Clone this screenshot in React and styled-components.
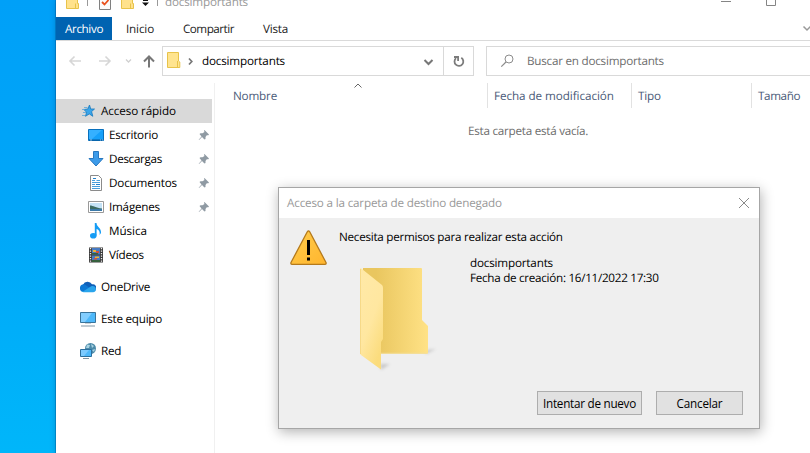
import React from "react";
import styled, { createGlobalStyle } from "styled-components";

const GlobalStyle = createGlobalStyle`
  * { box-sizing: border-box; }
  body { margin: 0; overflow: hidden; }
  svg { display: block; flex: none; }
`;

const Desktop = styled.div`
  position: relative;
  display: flex;
  width: 810px;
  height: 453px;
  padding-left: 56px;
  overflow: hidden;
  background: linear-gradient(180deg, #00a0f8 0%, #00a6f8 45%, #00b6fa 100%);
  font-family: "Open Sans", "Noto Sans", sans-serif;
  font-size: 11.7px;
  line-height: 16px;
  color: #000;
  text-rendering: geometricPrecision;
`;

const Window = styled.main`
  display: flex;
  flex-direction: column;
  flex: 1;
  min-width: 0;
  background: #fff;
  box-shadow: 0 0 6px rgba(0, 40, 90, 0.3), -1px 0 0 rgba(0, 70, 130, 0.3);
`;

const Text = styled.span`
  white-space: nowrap;
  letter-spacing: ${(p) => p.$track || 0}px;
`;

const TitleBar = styled.header`
  display: flex;
  height: 17px;
  color: #999;
`;

const QuickAccess = styled.div`
  width: 109px;
`;

const WindowTitle = styled.div`
  flex: 1;
  margin-top: -6px;
`;

const WindowControls = styled.div`
  width: 100px;
`;

const Tabs = styled.nav`
  display: flex;
  height: 24px;
  border-bottom: 1px solid #dadada;
`;

const Tab = styled.div`
  width: ${(p) => p.$width}px;
  padding: 4px 0 0 ${(p) => p.$pad}px;
  background: ${(p) => (p.$active ? "#0063b1" : "transparent")};
  color: ${(p) => (p.$active ? "#fff" : "#222")};
`;

const RibbonToggle = styled.div`
  margin-left: auto;
`;

const AddressRow = styled.div`
  display: flex;
  height: 42px;
  padding-top: 5px;
`;

const NavArrows = styled.div`
  width: 106px;
`;

const AddressBox = styled.div`
  display: flex;
  width: 312px;
  height: 30px;
  border: 1px solid #d9d9d9;
`;

const Crumbs = styled.div`
  display: flex;
  align-items: center;
  width: 281px;
  padding-left: 4px;
  border-right: 1px solid #d9d9d9;
`;

const CrumbName = styled.div`
  flex: 1;
`;

const Refresh = styled.div`
  width: 29px;
`;

const SearchBox = styled.div`
  display: flex;
  align-items: center;
  flex: 1;
  height: 30px;
  margin-left: 12px;
  border: 1px solid #d9d9d9;
  border-right: 0;
  color: #6d6d6d;
`;

const Body = styled.div`
  display: flex;
  flex: 1;
`;

const Sidebar = styled.aside`
  width: 159px;
  padding-top: 16px;
  border-right: 1px solid #f0f0f0;
`;

const Entry = styled.div`
  display: flex;
  align-items: center;
  width: 156px;
  height: 24px;
  margin-top: ${(p) => (p.$gap ? 8 : 0)}px;
  padding: 0 2px 0 ${(p) => (p.$nested ? 32 : 24)}px;
  gap: 5px;
  background: ${(p) => (p.$selected ? "#d9d9d9" : "transparent")};
`;

const EntryName = styled.div`
  flex: 1;
`;

const Content = styled.section`
  flex: 1;
  min-width: 0;
`;

const Columns = styled.div`
  display: flex;
  height: 25px;
  color: #4a5a78;
`;

const Column = styled.div`
  position: relative;
  width: ${(p) => p.$width}px;
  flex: none;
  padding: 5px 0 0 ${(p) => p.$pad}px;
  border-right: 1px solid #e2e2e2;
`;

const SortMark = styled.div`
  position: absolute;
  left: 138px;
  top: 0;
`;

const EmptyNote = styled.div`
  margin: 15px 0 0 253px;
  color: #6d6d6d;
`;

const Dialog = styled.div`
  position: absolute;
  left: 278px;
  top: 187px;
  width: 482px;
  height: 242px;
  display: flex;
  flex-direction: column;
  border: 1px solid #a6a6a6;
  background: #efefef;
  box-shadow: 1px 3px 12px rgba(0, 0, 0, 0.3);
`;

const DialogTitle = styled.div`
  display: flex;
  align-items: center;
  justify-content: space-between;
  height: 30px;
  padding: 0 9px 0 8px;
  background: #fff;
  color: #999;
`;

const DialogMain = styled.div`
  display: flex;
  flex: 1;
  padding: 11px 0 0 11px;
`;

const Message = styled.div`
  margin-left: 11px;
`;

const Detail = styled.div`
  display: flex;
  margin: 11px 0 0 21px;
`;

const FolderPreview = styled.div`
  height: 118px;
  padding-top: 12px;
`;

const Info = styled.div`
  display: flex;
  flex-direction: column;
  margin-left: 30px;
  line-height: 15px;
`;

const Actions = styled.div`
  display: flex;
  justify-content: flex-end;
  gap: 14px;
  padding: 0 16px 13px 0;
`;

const Button = styled.button`
  width: ${(p) => p.$width}px;
  height: 24px;
  padding: 0 0 1px;
  border: 1px solid #adadad;
  background: #e1e1e1;
  font: inherit;
  color: #000;
`;

const MiniFolder = () => (
  <svg width="14" height="20" viewBox="0 0 14 20">
    <path d="M.5 1.500H11.500V10L12.800 11V16.500H.5Z" fill="#ffe48f" stroke="#e8c34a" />
    <path d="M10.500 10V16.500" stroke="#e8c34a" />
  </svg>
);

const QuickAccessIcons = () => (
  <svg width="109" height="17" viewBox="0 0 109 17">
    <g fill="#ffe28c" stroke="#e8c34a">
      <path d="M10.500-6V8.500H22.500V3.500H21.500V-6ZM19.500 3.500V8" />
      <path d="M65.500-6V8.500H77.500V3.500H76.500V-6ZM74.500 3.500V8" />
    </g>
    <path d="M31.500 0V6M101.500 0V6" stroke="#999" />
    <path d="M43.500-2V9.500H54.500V-2" fill="#fafafa" stroke="#808080" />
    <path d="M46 2L48.500 4.500L52.500 0" fill="none" stroke="#e8501c" strokeWidth="1.800" />
    <path d="M87 0H92V1H87ZM86 2.500H93L89.500 6Z" fill="#111" />
  </svg>
);

const ControlIcons = () => (
  <svg width="100" height="17" viewBox="0 0 100 17" fill="none" stroke="#858585">
    <path d="M11 1.500H21M56.500 0V5.500H65.500V0" />
  </svg>
);

const ArrowIcons = () => (
  <svg width="106" height="30" viewBox="0 0 106 30" fill="none" strokeWidth="1.600">
    <path d="M25 15H14M18.500 10.500L14 15L18.500 19.500M43 15H54M49.500 10.500L54 15L49.500 19.500" stroke="#d6d6d6" />
    <path d="M70 13.500L72.500 16L75 13.500" stroke="#d0d0d0" strokeWidth="1.300" />
    <path d="M93 21.500V11M88 15.500L93 10.500L98 15.500" stroke="#777" strokeWidth="2" />
  </svg>
);

const Chevron = ({ width, height, d, color = "#777", stroke = 2 }) => (
  <svg width={width} height={height} viewBox={`0 0 ${width} ${height}`} fill="none" stroke={color} strokeWidth={stroke}>
    <path d={d} />
  </svg>
);

const RefreshIcon = () => (
  <svg width="29" height="28" viewBox="0 0 29 28" fill="none" stroke="#7c7c7c" strokeWidth="1.800">
    <path d="M17.300 10.800A4.400 4.400 0 1 1 12 11.200" />
    <path d="M10 10H14.100V14" />
  </svg>
);

const SearchIcon = () => (
  <svg width="40" height="28" viewBox="0 0 40 28" fill="none" stroke="#8c8c8c">
    <circle cx="22" cy="12" r="4" />
    <path d="M19 15L14.300 19.700" strokeWidth="1.200" />
  </svg>
);

const Pin = () => (
  <svg width="12" height="12" viewBox="0 0 12 12" fill="#8f9aa3">
    <path d="M6.500 1L11 5.500L10 6.500L9 6L7.500 8V10L6.500 10.500L4 8L1 11L.7 10.700L3.500 7.500L1.500 5L2.500 4.200H4.500L6.500 3L6 1.700Z" />
  </svg>
);

const icons = {
  star: (
    <>
      <path d="M9.500 2L10.700 6H14.500L11.600 8.600L12.800 13.300L9.300 10.900L5.500 13.300L6.600 9.200L3.800 6.500L7.800 6Z" fill="#39a5ea" stroke="#1679be" strokeWidth=".8" />
      <path d="M4 4.500H7.500M2 6.500H5M3 9.500H6M2 12.500H5" stroke="#58a7d9" strokeWidth=".8" />
    </>
  ),
  desktop: (
    <>
      <path d="M.5 2.500H15.500V13.500H.5Z" fill="#16a0fa" stroke="#0870bd" />
      <path d="M1 3H14L4 12H1Z" fill="#35b0ff" />
      <path d="M1 13H15" stroke="#075b9c" />
      <path d="M2 13H4M12 13H13M14 13H15" stroke="#cfe8fa" strokeWidth=".7" />
    </>
  ),
  download: <path d="M5.500.5H10.500V7.500H15L8 15L1 7.500H5.500Z" fill="#3d9be9" stroke="#2878c0" />,
  document: (
    <>
      <path d="M2.500.5H10.500L13.500 3.500V15.500H2.500Z" fill="#fff" stroke="#8b8b8b" />
      <path d="M4 5.500H7M4 7.500H12M4 9.500H7M4 11.500H12M4 13.500H12M8.500 5.500H12" stroke="#4a9fdc" />
      <path d="M5 3.500H8M8 9.500H12" stroke="#2382cc" />
    </>
  ),
  picture: (
    <>
      <path d="M.5 2.500H15.500V13.500H.5Z" fill="#fff" stroke="#999" />
      <path d="M2 4H14V12H2Z" fill="#c4e2f6" />
      <path d="M2 6.500C5 6.500 8 9 14 9.500V10H2Z" fill="#3c6b62" />
      <path d="M2 10H14V12H2Z" fill="#3b79a8" />
    </>
  ),
  music: (
    <>
      <ellipse cx="5.300" cy="12.700" rx="3.300" ry="2.800" fill="#149cf5" />
      <path d="M6.800 0H8.500C8.500 4 13.500 4.500 13 10L11.500 12C12.500 8 10 6.500 8.600 6V12.500H6.800Z" fill="#149cf5" />
    </>
  ),
  video: (
    <>
      <path d="M1 .5H15V15.500H1Z" fill="#3a3a3a" />
      <path d="M2.500 1V15M13.500 1V15" stroke="#eee" strokeWidth="1.300" strokeDasharray="1.300 1.200" />
      <path d="M4 1H12V7.500H4ZM4 8.500H12V15H4Z" fill="#477bc4" />
      <path d="M5 3H8V5H5ZM7 9.500H11V11H7Z" fill="#e7b43a" />
      <path d="M8 4H11V6H8ZM6 11H9V12.500H6Z" fill="#d4513f" />
      <path d="M4 6H10V7.500H4ZM4 13H12V15H4Z" fill="#35613e" />
    </>
  ),
  cloud: (
    <>
      <path d="M3 12A3.300 3.300 0 0 1 3 5.700A5 5 0 0 1 12 5.300A3.500 3.500 0 0 1 14 12Z" fill="#0f5fb8" />
      <path d="M0 9.200A3.500 3.500 0 0 1 5.500 6L10 9L4 13A3.500 3.500 0 0 1 0 9.200Z" fill="#0c78d4" />
      <path d="M3 12.500L10 8C12 6 16 7 16 10.300C16 12 15 13.200 13 13.200H3.500C2.500 13.200 1.800 12.700 1.300 12Z" fill="#2aa5ec" />
    </>
  ),
  computer: (
    <>
      <path d="M.5 1.500H15.500V11.500H.5Z" fill="#4db8fa" stroke="#39749b" />
      <path d="M1 2H12L5 11H1Z" fill="#82ceff" />
      <path d="M5 12.500H11" stroke="#c9d2d8" />
      <path d="M1 15H15" stroke="#8096a5" />
    </>
  ),
  network: (
    <>
      <circle cx="10.500" cy="5.500" r="5.500" fill="#4d8ba9" />
      <path d="M7 1.500L10 2L9 5L6 5ZM11 1L14 3L12 5ZM12 7L15 6L14 9Z" fill="#a9d3e3" />
      <path d="M.5 6.500H11.500V13.500H.5Z" fill="#4db8fa" stroke="#2c6f9d" />
      <path d="M1 7H9L4 13H1Z" fill="#7bcaff" />
      <path d="M3 15.500H9" stroke="#8096a5" />
    </>
  ),
};

const EntryIcon = ({ name }) => (
  <svg width="16" height="16" viewBox="0 0 16 16" fill="none">
    {icons[name]}
  </svg>
);

const entries = [
  { name: "Acceso rápido", icon: "star", track: -0.11, selected: true },
  { name: "Escritorio", icon: "desktop", track: -0.24, nested: true, pinned: true },
  { name: "Descargas", icon: "download", track: -0.33, nested: true, pinned: true },
  { name: "Documentos", icon: "document", track: -0.17, nested: true, pinned: true },
  { name: "Imágenes", icon: "picture", track: -0.23, nested: true, pinned: true },
  { name: "Música", icon: "music", track: -0.05, nested: true },
  { name: "Vídeos", icon: "video", track: -0.21, nested: true },
  { name: "OneDrive", icon: "cloud", track: -0.31, gap: true },
  { name: "Este equipo", icon: "computer", track: -0.26, gap: true },
  { name: "Red", icon: "network", track: -0.3, gap: true },
];

const WarningIcon = () => (
  <svg width="38" height="37" viewBox="0 0 38 37">
    <defs>
      <linearGradient id="amber" x1="0" y1="0" x2="1" y2="1">
        <stop offset="0" stopColor="#ffcd4c" />
        <stop offset="1" stopColor="#ffb52e" />
      </linearGradient>
    </defs>
    <path d="M17.300 2.800Q18.500.8 19.700 2.800L36 33.500Q36.500 35.300 35 35.300H2Q.5 35.300 1 33.500Z" fill="url(#amber)" stroke="#b57a1c" strokeWidth="1.300" strokeLinejoin="round" />
    <path d="M17 11H20V26H17ZM17 28.500H20V31.500H17Z" fill="#000" />
  </svg>
);

const FolderIcon = () => (
  <svg width="80" height="106" viewBox="0 0 80 106">
    <defs>
      <linearGradient id="back">
        <stop offset=".2" stopColor="#e9c65f" />
        <stop offset="1" stopColor="#ffe286" />
      </linearGradient>
      <linearGradient id="front" x1="0" y1="0" x2=".6" y2="1">
        <stop offset="0" stopColor="#ffe9a8" />
        <stop offset=".6" stopColor="#ffe7a0" />
        <stop offset="1" stopColor="#fbdc7d" />
      </linearGradient>
      <filter id="soft" x="-50%" y="-50%" width="200%" height="200%">
        <feGaussianBlur stdDeviation="1.500" />
      </filter>
    </defs>
    <path d="M66 82L76 81L66 86ZM20 96L30 96L21 102Z" fill="#999" opacity=".45" filter="url(#soft)" />
    <path d="M3 0H61Q62 0 62 1V52L68 58V84.500Q68 86 66.500 86H3Z" fill="url(#back)" />
    <path d="M21 85.300H67" stroke="#f3df9f" />
    <path d="M0 1Q0 0 1 .3L22 17Q23 18 23 20V71L21 74V101.500L1 87Q0 86 0 85Z" fill="url(#front)" />
    <path d="M.5 1V86" stroke="#f6d988" />
  </svg>
);

export default function App() {
  return (
    <Desktop>
      <GlobalStyle />
      <Window>
        <TitleBar>
          <QuickAccess><QuickAccessIcons /></QuickAccess>
          <WindowTitle><Text $track={-0.19}>docsimportants</Text></WindowTitle>
          <WindowControls><ControlIcons /></WindowControls>
        </TitleBar>
        <Tabs>
          <Tab $active $width={56} $pad={9}><Text $track={-0.39}>Archivo</Text></Tab>
          <Tab $width={57} $pad={14}><Text $track={-0.16}>Inicio</Text></Tab>
          <Tab $width={80} $pad={14}><Text $track={-0.51}>Compartir</Text></Tab>
          <Tab $width={60} $pad={14}><Text $track={-0.23}>Vista</Text></Tab>
          <RibbonToggle>
            <Chevron width={8} height={23} d="M1.500 9.500L5 13L8.500 9.500" color="#999" stroke={1.5} />
          </RibbonToggle>
        </Tabs>
        <AddressRow>
          <NavArrows><ArrowIcons /></NavArrows>
          <AddressBox>
            <Crumbs>
              <MiniFolder />
              <Chevron width={21} height={28} d="M8 11.500L10.800 14.500L8 17.500" stroke={1.7} />
              <CrumbName><Text $track={-0.19}>docsimportants</Text></CrumbName>
              <Chevron width={21} height={28} d="M2.500 13L6.500 17L10.500 13" />
            </Crumbs>
            <Refresh><RefreshIcon /></Refresh>
          </AddressBox>
          <SearchBox>
            <SearchIcon />
            <Text $track={-0.24}>Buscar en docsimportants</Text>
          </SearchBox>
        </AddressRow>
        <Body>
          <Sidebar>
            {entries.map((e) => (
              <Entry key={e.name} $selected={e.selected} $nested={e.nested} $gap={e.gap}>
                <EntryIcon name={e.icon} />
                <EntryName><Text $track={e.track}>{e.name}</Text></EntryName>
                {e.pinned && <Pin />}
              </Entry>
            ))}
          </Sidebar>
          <Content>
            <Columns>
              <Column $width={273} $pad={18}>
                <Text $track={-0.19}>Nombre</Text>
                <SortMark><Chevron width={10} height={6} d="M1.500 4.500L5 1L8.500 4.500" stroke={1} color="#666" /></SortMark>
              </Column>
              <Column $width={144} $pad={6}><Text $track={-0.07}>Fecha de modificación</Text></Column>
              <Column $width={120} $pad={6}><Text $track={-0.15}>Tipo</Text></Column>
              <Column $width={80} $pad={6}><Text $track={-0.4}>Tamaño</Text></Column>
            </Columns>
            <EmptyNote><Text $track={-0.26}>Esta carpeta está vacía.</Text></EmptyNote>
          </Content>
        </Body>
      </Window>
      <Dialog role="dialog">
        <DialogTitle>
          <Text $track={-0.18}>Acceso a la carpeta de destino denegado</Text>
          <Chevron width={12} height={12} d="M1 1L11 11M11 1L1 11" stroke={1} color="#8a8a8a" />
        </DialogTitle>
        <DialogMain>
          <WarningIcon />
          <Message>
            <Text $track={-0.27}>Necesita permisos para realizar esta acción</Text>
            <Detail>
              <FolderPreview><FolderIcon /></FolderPreview>
              <Info>
                <Text $track={-0.19}>docsimportants</Text>
                <Text $track={-0.29}>Fecha de creación: 16/11/2022 17:30</Text>
              </Info>
            </Detail>
          </Message>
        </DialogMain>
        <Actions>
          <Button $width={105}><Text $track={-0.26}>Intentar de nuevo</Text></Button>
          <Button $width={87}><Text $track={-0.19}>Cancelar</Text></Button>
        </Actions>
      </Dialog>
    </Desktop>
  );
}
